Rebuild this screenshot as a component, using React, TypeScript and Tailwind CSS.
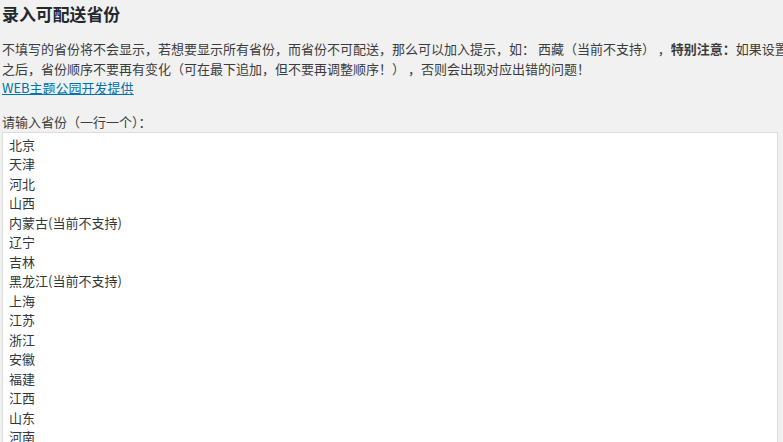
import React from "react";

const provinces = [
  "北京",
  "天津",
  "河北",
  "山西",
  "内蒙古(当前不支持)",
  "辽宁",
  "吉林",
  "黑龙江(当前不支持)",
  "上海",
  "江苏",
  "浙江",
  "安徽",
  "福建",
  "江西",
  "山东",
  "河南",
  "湖北",
  "湖南",
  "广东",
];

export default function App() {
  return (
    <div
      className="w-[783px] h-[442px] overflow-hidden bg-[#f1f1f1] pl-[2px] text-[#3c3c3c]"
      style={{ fontFamily: '"Noto Sans CJK SC", "Noto Sans", sans-serif' }}
    >
      <h2 className="text-[16.9px] leading-[28px] font-bold text-[#23282d] m-0">录入可配送省份</h2>
      <div className="mt-[11px] text-[13px] leading-[19.5px]">
        <div className="whitespace-nowrap">
          不填写的省份将不会显示，若想要显示所有省份，而省份不可配送，那么可以加入提示，如： 西藏（当前不支持） ，
          <b className="font-bold">特别注意：</b>如果设置好了省份并保存
        </div>
        <div className="whitespace-nowrap">
          之后，省份顺序不要再有变化（可在最下追加，但不要再调整顺序！） ，否则会出现对应出错的问题！
        </div>
        <div>
          <a href="#" className="text-[#0073aa] underline">WEB主题公园开发提供</a>
        </div>
      </div>
      <div className="mt-[14.5px] text-[13px] leading-[19.5px]">请输入省份（一行一个）：</div>
      <div className="w-[776px] h-[400px] border border-[#dddddd] bg-white pt-[2px] px-[6px] text-[13px] leading-[19.5px] text-[#32373c] overflow-hidden">
        {provinces.map((p) => (
          <div key={p}>{p}</div>
        ))}
      </div>
    </div>
  );
}
